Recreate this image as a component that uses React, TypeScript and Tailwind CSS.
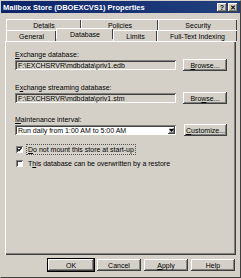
import React from "react";

const raised =
  "shadow-[inset_-1px_-1px_#404040,inset_1px_1px_#ffffff,inset_-2px_-2px_#808080]";
const sunken =
  "shadow-[inset_1px_1px_#808080,inset_-1px_-1px_#ffffff,inset_2px_2px_#404040]";

const Btn = ({ children, w = "w-[44px]", className = "" }: { children: React.ReactNode; w?: string; className?: string }) => (
  <div className={`${w} h-[12px] bg-[#d4d0c8] ${raised} flex items-center justify-center text-black ${className}`}>
    {children}
  </div>
);

const Tab = ({ label, w, active = false }: { label: string; w: string; active?: boolean }) => (
  <div
    className={`${w} h-full flex items-center justify-center border-t border-l border-white shadow-[inset_-1px_0_#404040] rounded-t-[1px] ${
      active ? "-mt-[2px] h-[13px] relative z-10 bg-[#d4d0c8]" : ""
    }`}
  >
    {label}
  </div>
);

const Check = ({ checked }: { checked?: boolean }) => (
  <div className={`w-[7px] h-[7px] bg-white ${sunken} flex items-center justify-center`}>
    {checked && (
      <svg width="5" height="5" viewBox="0 0 5 5">
        <path d="M0.5 2.2 L2 3.7 L4.5 0.8" stroke="#000" strokeWidth="1.2" fill="none" />
      </svg>
    )}
  </div>
);

export default function App() {
  return (
    <div
      className="w-[241px] h-[278px] bg-[#d4d0c8] flex flex-col text-[7px] leading-[9px] text-black border-r border-b border-[#404040] border-l border-t border-l-[#d4d0c8] border-t-[#d4d0c8]"
      style={{ fontFamily: '"Liberation Sans", Arial, sans-serif' }}
    >
      <div className="h-[12px] mx-[0px] bg-gradient-to-r from-[#0a246a] to-[#23407e] flex items-center justify-between pl-[2px] pr-[2px]">
        <span className="text-white font-bold text-[7.5px]">Mailbox Store (DBOEXCVS1) Properties</span>
        <div className="flex gap-[1px]">
          <div className={`w-[10px] h-[9px] bg-[#d4d0c8] ${raised} flex items-center justify-center font-bold text-[7px]`}>?</div>
          <div className={`w-[10px] h-[9px] bg-[#d4d0c8] ${raised} flex items-center justify-center font-bold text-[7px]`}>✕</div>
        </div>
      </div>

      <div className="mt-[6px] pl-[5px] flex flex-col">
        <div className="flex h-[11px]">
          <Tab label="Details" w="w-[75px]" />
          <Tab label="Policies" w="w-[77px]" />
          <Tab label="Security" w="w-[79px]" />
        </div>
        <div className="flex h-[11px]">
          <Tab label="General" w="w-[50px]" />
          <Tab label="Database" w="w-[57px]" active />
          <Tab label="Limits" w="w-[44px]" />
          <Tab label="Full-Text Indexing" w="w-[80px]" />
        </div>
      </div>

      <div className="ml-[4px] w-[231px] h-[214px] border-t border-l border-white shadow-[inset_-1px_-1px_#404040,inset_-2px_-2px_#808080] pl-[9px] flex flex-col">
        <div className="mt-[8px]"><u>E</u>xchange database:</div>
        <div className="flex items-center mt-[0px]">
          <div className={`w-[161px] h-[10px] ${sunken} pl-[3px] flex items-center`}>F:\EXCHSRVR\mdbdata\priv1.edb</div>
          <Btn className="ml-[7px]"><u>B</u>rowse...</Btn>
        </div>
        <div className="mt-[12px]">E<u>x</u>change streaming database:</div>
        <div className="flex items-center">
          <div className={`w-[161px] h-[10px] ${sunken} pl-[3px] flex items-center`}>F:\EXCHSRVR\mdbdata\priv1.stm</div>
          <Btn className="ml-[7px]">Bro<u>w</u>se...</Btn>
        </div>
        <div className="mt-[11px]"><u>M</u>aintenance interval:</div>
        <div className="flex items-center">
          <div className={`w-[161px] h-[10px] bg-white ${sunken} pl-[3px] flex items-center justify-between`}>
            <span>Run daily from 1:00 AM to 5:00 AM</span>
            <div className={`w-[7px] h-[7px] mr-[1px] bg-[#d4d0c8] ${raised} flex items-center justify-center`}>
              <svg width="5" height="3" viewBox="0 0 5 3"><path d="M0 0 H5 L2.5 3 Z" fill="#000" /></svg>
            </div>
          </div>
          <Btn className="ml-[8px] h-[12px]" w="w-[43px]"><u>C</u>ustomize...</Btn>
        </div>
        <div className="mt-[9px] flex items-center gap-[4px] ml-[1px]">
          <Check checked />
          <span className="outline outline-1 outline-dotted outline-[#555] px-[1px]"><u>D</u>o not mount this store at start-up</span>
        </div>
        <div className="mt-[5px] flex items-center gap-[4px] ml-[1px]">
          <Check />
          <span className="px-[1px]">T<u>h</u>is database can be overwritten by a restore</span>
        </div>
      </div>

      <div className="mt-[4px] flex justify-end gap-[3px] pr-[5px]">
        <Btn w="w-[46px]" className="outline outline-1 outline-black -outline-offset-0">OK</Btn>
        <Btn>Cancel</Btn>
        <Btn><u>A</u>pply</Btn>
        <Btn>Help</Btn>
      </div>
    </div>
  );
}
